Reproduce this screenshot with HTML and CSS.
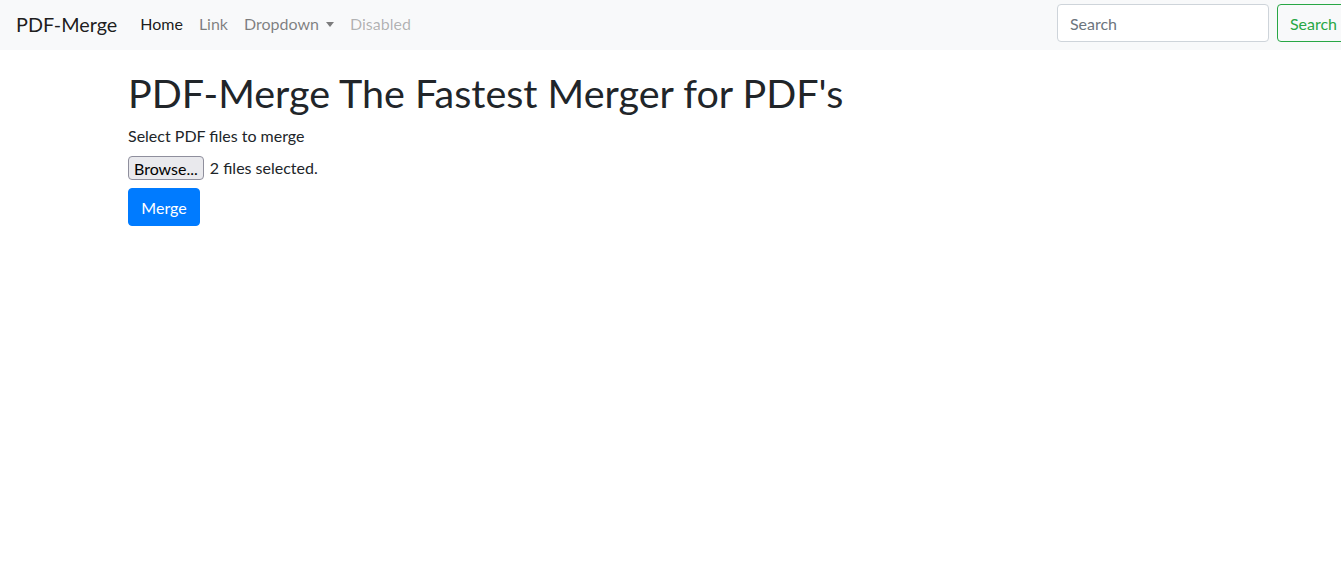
FILE: index.html
```html
<!DOCTYPE html>
<html>
<head>
<meta charset="utf-8">
<title>PDF-Merge</title>
<link rel="stylesheet" href="styles.css">
</head>
<body>
<nav class="navbar">
  <a class="brand" href="#">PDF-Merge</a>
  <ul class="nav">
    <li><a class="nav-link active" href="#">Home</a></li>
    <li><a class="nav-link" href="#">Link</a></li>
    <li><a class="nav-link dropdown" href="#">Dropdown<span class="caret"></span></a></li>
    <li><a class="nav-link disabled" href="#">Disabled</a></li>
  </ul>
  <form class="search">
    <input class="search-input" type="text" placeholder="Search">
    <button class="search-btn" type="button">Search</button>
  </form>
</nav>
<main class="container">
  <h1 class="title">PDF-Merge The Fastest Merger for PDF's</h1>
  <label class="label">Select PDF files to merge</label>
  <div class="file-row">
    <button class="browse" type="button">Browse...</button>
    <span class="file-status">2 files selected.</span>
  </div>
  <button class="merge" type="button">Merge</button>
</main>
</body>
</html>
```
FILE: styles.css
```css
html, body {
  margin: 0;
  overflow: hidden;
}
body {
  font-family: Lato, "Noto Sans", sans-serif;
  font-size: 16px;
  line-height: 1.5;
  color: #212529;
  background: #fff;
}
.navbar {
  width: 1366px;
  box-sizing: border-box;
  height: 50px;
  display: flex;
  align-items: center;
  padding: 0 16px 4px;
  background: #f8f9fa;
}
.brand {
  font-size: 19.8px;
  line-height: 30px;
  color: rgba(0,0,0,.9);
  text-decoration: none;
  margin: 2px 15px 0 0;
}
.nav {
  display: flex;
  list-style: none;
  margin: 2px 0 0;
  padding: 0;
}
.nav-link {
  display: block;
  padding: 8px 8px;
  color: rgba(0,0,0,.5);
  text-decoration: none;
}
.nav-link.active { color: rgba(0,0,0,.9); }
.nav-link.disabled { color: rgba(0,0,0,.3); }
.caret {
  display: inline-block;
  margin-left: 7px;
  vertical-align: 3px;
  border-top: 5px solid;
  border-left: 4px solid transparent;
  border-right: 4px solid transparent;
}
.search {
  margin-left: auto;
  display: flex;
  align-items: center;
}
.search-input {
  box-sizing: border-box;
  width: 212px;
  height: 38px;
  padding: 6px 12px;
  font-family: inherit;
  font-size: 16px;
  color: #495057;
  border: 1px solid #ced4da;
  border-radius: 4px;
  background: #fff;
  margin-right: 8px;
}
.search-input::placeholder { color: #6c757d; }
.search-btn {
  box-sizing: border-box;
  height: 38px;
  padding: 6px 12px;
  font-family: inherit;
  font-size: 16px;
  color: #28a745;
  background: transparent;
  border: 1px solid #28a745;
  border-radius: 4px;
}
.container {
  padding: 0 0 0 128px;
}
.title {
  font-size: 39.5px;
  font-weight: 400;
  line-height: 1.2;
  margin: 19px 0 8px;
}
.label {
  display: block;
  margin-bottom: 8px;
}
.file-row {
  display: flex;
  align-items: center;
  height: 24px;
  margin-bottom: 8px;
}
.browse {
  box-sizing: border-box;
  height: 24px;
  padding: 0 5px;
  font-family: inherit;
  font-size: 16px;
  color: #000;
  background: #e9e9ed;
  border: 1px solid #8f8f9d;
  border-radius: 4px;
  margin-right: 6px;
}
.file-status { color: #212529; }
.merge {
  box-sizing: border-box;
  height: 38px;
  width: 72px;
  padding: 6px 12px;
  font-family: inherit;
  font-size: 16px;
  color: #fff;
  background: #007bff;
  border: 1px solid #007bff;
  border-radius: 4px;
}
```
